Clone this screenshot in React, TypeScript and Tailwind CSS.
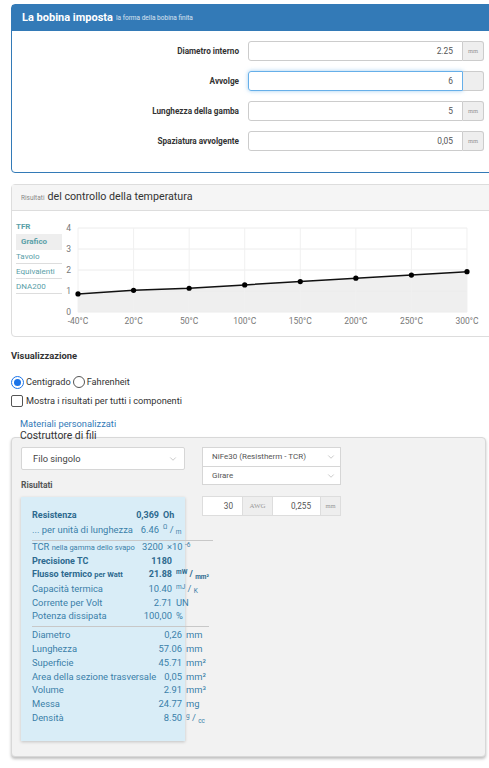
import { ChevronDown } from "lucide-react";

const coilRows = [
  { label: "Diametro interno", value: "2.25", unit: "mm", focus: false },
  { label: "Avvolge", value: "6", unit: "", focus: true },
  { label: "Lunghezza della gamba", value: "5", unit: "mm", focus: false },
  { label: "Spaziatura avvolgente", value: "0,05", unit: "mm", focus: false },
];

const temps = ["-40°C", "20°C", "50°C", "100°C", "150°C", "200°C", "250°C", "300°C"];
const tfr = [0.86, 1.03, 1.13, 1.29, 1.45, 1.61, 1.76, 1.92];

const px = (i: number) => 78 + i * 55.57;
const py = (v: number) => 312 - v * 21;

function Chart() {
  const line = tfr.map((v, i) => `${px(i)},${py(v)}`).join(" ");
  const area = `78,312 ${line} 467,312`;
  return (
    <svg width="425" height="125" viewBox="62 211 425 125" className="block">
      <polygon points={area} fill="#efefef" />
      {[0, 1, 2, 3, 4].map((v) => (
        <line key={v} x1={78} x2={467} y1={py(v)} y2={py(v)} stroke="#ececec" strokeWidth="1" />
      ))}
      {temps.map((_, i) => (
        <line key={i} x1={px(i)} x2={px(i)} y1={228} y2={312} stroke="#f0f0f0" strokeWidth="1" />
      ))}
      {[0, 1, 2, 3, 4].map((v) => (
        <text key={v} x={71} y={py(v) + 3} textAnchor="end" fontSize="8.5" fill="#777" fontFamily="Roboto, sans-serif">
          {v}
        </text>
      ))}
      {temps.map((t, i) => (
        <text key={t} x={px(i)} y={324} textAnchor="middle" fontSize="8.5" fill="#777" fontFamily="Roboto, sans-serif">
          {t}
        </text>
      ))}
      <polyline points={line} fill="none" stroke="#111" strokeWidth="1.5" />
      {tfr.map((v, i) => (
        <circle key={i} cx={px(i)} cy={py(v)} r="2.6" fill="#000" />
      ))}
    </svg>
  );
}

function Sel({ text, className }: { text: string; className: string }) {
  return (
    <div className={`flex items-center justify-between bg-white border border-[#d6d6d6] ${className}`}>
      <span>{text}</span>
      <ChevronDown size={10} strokeWidth={1.5} className="text-[#aaa]" />
    </div>
  );
}

type Row = { label: React.ReactNode; value: string; unit?: React.ReactNode; bold?: boolean; shift?: number };

const block1: Row[] = [
  { label: "Resistenza", value: "0,369", unit: "Oh", bold: true },
  {
    label: "... per unità di lunghezza",
    value: "6.46",
    unit: (
      <>
        <sup className="text-[6.5px]">Ω</sup> / <sub className="text-[6.5px]">m</sub>
      </>
    ),
  },
];

const block2: Row[] = [
  {
    label: (
      <>
        TCR <span className="text-[7.5px]">nella gamma dello svapo</span>
      </>
    ),
    value: "3200",
    shift: 9,
    unit: (
      <>
        ×10 <sup className="text-[6.5px]">-6</sup>
      </>
    ),
  },
  { label: "Precisione TC", value: "1180", bold: true },
  {
    label: (
      <>
        Flusso termico <span className="text-[7.5px]">per Watt</span>
      </>
    ),
    value: "21.88",
    bold: true,
    unit: (
      <>
        <sup className="text-[6.5px]">mW</sup> / <sub className="text-[6.5px]">mm²</sub>
      </>
    ),
  },
  {
    label: "Capacità termica",
    value: "10.40",
    unit: (
      <>
        <sup className="text-[6.5px]">mJ</sup> / <sub className="text-[6.5px]">K</sub>
      </>
    ),
  },
  { label: "Corrente per Volt", value: "2.71", unit: "UN" },
  { label: "Potenza dissipata", value: "100,00", unit: "%" },
];

const block3: Row[] = [
  { label: "Diametro", value: "0,26", unit: "mm" },
  { label: "Lunghezza", value: "57.06", unit: "mm" },
  { label: "Superficie", value: "45.71", unit: "mm²" },
  { label: "Area della sezione trasversale", value: "0,05", unit: "mm²" },
  { label: "Volume", value: "2.91", unit: "mm³" },
  { label: "Messa", value: "24.77", unit: "mg" },
  {
    label: "Densità",
    value: "8.50",
    unit: (
      <>
        <sup className="text-[6.5px]">g</sup> / <sub className="text-[6.5px]">cc</sub>
      </>
    ),
  },
];

function Block({ rows, valueEnd, className }: { rows: Row[]; valueEnd: number; className?: string }) {
  return (
    <div className={className}>
      {rows.map((r, i) => (
        <div
          key={i}
          className={`flex h-[13.8px] items-center whitespace-nowrap ${
            r.bold ? "font-bold text-[9px] text-[#2d6a8f]" : "text-[9.4px] text-[#3a7fa9]"
          }`}
        >
          <div className="shrink-0" style={{ width: valueEnd - (r.shift ?? 0) }}>
            <div className="flex justify-between">
              <span>{r.label}</span>
              <span>{r.value}</span>
            </div>
          </div>
          <span className="pl-[4px]">{r.unit}</span>
        </div>
      ))}
    </div>
  );
}

export default function App() {
  return (
    <div className="w-[489px] h-[768px] overflow-hidden bg-white font-['Roboto',sans-serif] text-[#333]">
      <div className="pt-[4px] pl-[11px]">
        <div className="w-[485px] border border-[#337ab7] rounded-[4px] bg-white">
          <div className="h-[26px] bg-[#337ab7] flex items-center pl-[10px] gap-[3px] text-white">
            <span className="text-[11px] font-bold">La bobina imposta</span>
            <span className="text-[6.5px] text-white/80 mt-[2px]">la forma della bobina finita</span>
          </div>
          <div className="pt-[10px] pb-[21px] flex flex-col gap-[10px]">
            {coilRows.map((r) => (
              <div key={r.label} className="flex items-center h-[20px]">
                <div className="w-[236px] pr-[9px] text-right text-[8.2px] font-bold text-[#333]">{r.label}</div>
                <div
                  className={`w-[215px] h-[20px] flex items-center justify-end pr-[9px] text-[8.4px] text-[#555] border rounded-l-[3px] ${
                    r.focus ? "border-[#66afe9] shadow-[0_0_4px_rgba(102,175,233,0.6)]" : "border-[#ccc]"
                  }`}
                >
                  {r.value}
                </div>
                <div className="w-[21px] h-[20px] flex items-center justify-center bg-[#eee] border border-l-0 border-[#ccc] rounded-r-[3px] text-[6.5px] text-[#999] font-['Liberation_Serif',serif]">
                  {r.unit}
                </div>
              </div>
            ))}
          </div>
        </div>

        <div className="mt-[11px] w-[485px] border border-[#ddd] rounded-[4px] bg-white">
          <div className="h-[26px] bg-[#f5f5f5] border-b border-[#ddd] flex items-center pl-[9px] gap-[3px]">
            <span className="text-[6.5px] text-[#888] mt-[2px]">Risultati</span>
            <span className="text-[10.7px] text-[#333]">del controllo della temperatura</span>
          </div>
          <div className="flex h-[125px]">
            <div className="w-[50px] pl-[4px] pt-[9px] text-[8px] text-[#5aa0a8]">
              <div className="h-[14px] leading-[14px] font-bold">TFR</div>
              <div className="h-[16px] leading-[16px] bg-[#eee] pl-[5px] font-bold">Grafico</div>
              <div className="h-[14px] leading-[14px] border-b border-[#ddd]">Tavolo</div>
              <div className="h-[15px] leading-[15px] border-b border-[#ddd]">Equivalenti</div>
              <div className="h-[15px] leading-[15px] border-b border-[#ddd]">DNA200</div>
            </div>
            <Chart />
          </div>
        </div>

        <div className="mt-[13px] text-[9.4px] font-bold leading-[12px]">Visualizzazione</div>
        <div className="mt-[13px] flex items-center h-[14px] text-[9.2px]">
          <span className="w-[13px] h-[13px] rounded-full border-[1.5px] border-[#1a73e8] flex items-center justify-center">
            <span className="w-[7px] h-[7px] rounded-full bg-[#1a73e8]" />
          </span>
          <span className="ml-[2px]">Centigrado</span>
          <span className="ml-[2px] w-[12px] h-[12px] rounded-full border border-[#555]" />
          <span className="ml-[2px]">Fahrenheit</span>
        </div>
        <div className="mt-[5px] flex items-center h-[14px] text-[9.2px]">
          <span className="w-[12px] h-[12px] rounded-[2px] border border-[#555]" />
          <span className="ml-[3px]">Mostra i risultati per tutti i componenti</span>
        </div>
        <div className="mt-[10px] pl-[9px] text-[9.3px] leading-[12px] text-[#337ab7]">Materiali personalizzati</div>
        <div className="relative z-10 pl-[9px] text-[10.4px] leading-[12px] text-[#333]">Costruttore di fili</div>

        <div className="-mt-[5px] w-[475px] h-[320px] rounded-[4px] border border-[#d8d8d8] bg-[#f2f2f2] shadow-[0_2px_3px_rgba(0,0,0,0.25)] flex gap-[17px] pt-[9px] pl-[9px] overflow-hidden">
          <div className="w-[164px] shrink-0">
            <Sel text="Filo singolo" className="h-[23px] pl-[11px] pr-[6px] text-[9.3px] text-[#444] rounded-[2px]" />
            <div className="mt-[8px] text-[8.5px] font-bold text-[#555] leading-[14px]">Risultati</div>
            <div className="mt-[5px] h-[244px] bg-[#d9edf7] shadow-[0_1px_3px_rgba(0,0,0,0.2)] pt-[12px] pl-[11px]">
              <Block rows={block1} valueEnd={127} />
              <div className="mt-[3px] w-[181px] border-t border-[#c8c8c8]" />
              <Block rows={block2} valueEnd={140} className="mt-[0px]" />
              <div className="mt-[3px] w-[177px] border-t border-[#c8c8c8]" />
              <Block rows={block3} valueEnd={150} className="mt-[1px]" />
            </div>
          </div>
          <div className="w-[139px] shrink-0">
            <Sel text="NiFe30 (Resistherm - TCR)" className="h-[20px] pl-[9px] pr-[4px] text-[8px] text-[#555]" />
            <Sel text="Girare" className="h-[19px] -mt-[1px] pl-[9px] pr-[4px] text-[8px] text-[#555]" />
            <div className="mt-[11px] flex h-[20px] text-[8.2px] text-[#555]">
              <div className="w-[41px] bg-white border border-[#ddd] flex items-center justify-end pr-[9px]">30</div>
              <div className="w-[29px] bg-[#eee] border-y border-[#ddd] flex items-center justify-center text-[7px] text-[#999] font-['Liberation_Serif',serif]">AWG</div>
              <div className="w-[49px] bg-white border border-[#ddd] flex items-center justify-end pr-[9px]">0,255</div>
              <div className="w-[20px] bg-[#eee] border-y border-r border-[#ddd] flex items-center justify-center text-[6.5px] text-[#999] font-['Liberation_Serif',serif]">mm</div>
            </div>
          </div>
        </div>
      </div>
    </div>
  );
}
